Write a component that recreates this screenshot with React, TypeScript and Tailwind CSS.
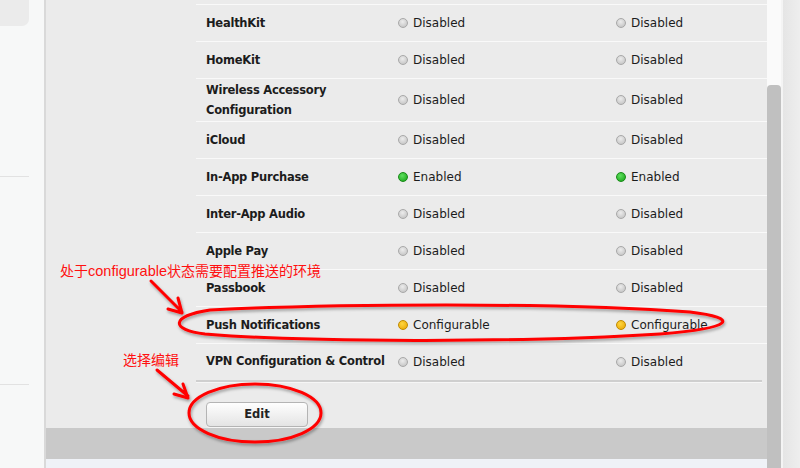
import React from "react";

type S = "d" | "e" | "c";
const rows: { name: string[]; a: S; b: S; h: string }[] = [
  { name: ["HealthKit"], a: "d", b: "d", h: "h-[37px]" },
  { name: ["HomeKit"], a: "d", b: "d", h: "h-[37px]" },
  { name: ["Wireless Accessory", "Configuration"], a: "d", b: "d", h: "h-[43px]" },
  { name: ["iCloud"], a: "d", b: "d", h: "h-[37px]" },
  { name: ["In-App Purchase"], a: "e", b: "e", h: "h-[37px]" },
  { name: ["Inter-App Audio"], a: "d", b: "d", h: "h-[37px]" },
  { name: ["Apple Pay"], a: "d", b: "d", h: "h-[37px]" },
  { name: ["Passbook"], a: "d", b: "d", h: "h-[37px]" },
  { name: ["Push Notifications"], a: "c", b: "c", h: "h-[37px]" },
];

function Dot({ s }: { s: S }) {
  if (s === "e")
    return <span className="inline-block w-[10px] h-[10px] rounded-full bg-[radial-gradient(circle_at_40%_35%,#5ee05e,#15a015)] border border-[#178a17]" />;
  if (s === "c")
    return <span className="inline-block w-[10px] h-[10px] rounded-full bg-[radial-gradient(circle_at_40%_35%,#ffd640,#e8a400)] border border-[#c08a00]" />;
  return <span className="inline-block w-[10px] h-[10px] rounded-full bg-[radial-gradient(circle_at_45%_35%,#ececec,#bdbdbd)] border border-[#a8a8a8]" />;
}

function Status({ s }: { s: S }) {
  const label = s === "e" ? "Enabled" : s === "c" ? "Configurable" : "Disabled";
  return (
    <div className="flex items-center gap-[5px]">
      <Dot s={s} />
      <span className="text-[12px] text-[#1c1c1c]">{label}</span>
    </div>
  );
}

export default function App() {
  return (
    <div
      className="relative w-[800px] h-[468px] flex overflow-hidden bg-[#ebebeb]"
      style={{ fontFamily: '"DejaVu Sans", "Noto Sans CJK SC", sans-serif' }}
    >
      {/* sidebar */}
      <div className="w-[46px] h-full bg-[#f7f8f8] border-r-2 border-[#d9d9d9] flex flex-col">
        <div className="w-[29px] h-[26px] bg-[#ebebeb] rounded-br-[7px]" />
        <div className="w-[29px] mt-[150px] border-t border-[#e2e2e2]" />
        <div className="w-[29px] mt-[207px] border-t border-[#e2e2e2]" />
      </div>

      {/* main */}
      <div className="w-[721px] h-full flex flex-col bg-[#ebebeb]">
        <div className="pl-[150px] flex flex-col">
          <div className="h-[5px] border-b border-[#f9f9f9]" />
          {rows.map((r, i) => (
            <div key={i} className={`${r.h} border-b border-[#f9f9f9] flex items-center`}>
              <div className="w-[202px] pl-[10px] text-[11.5px] tracking-[-0.25px] font-bold text-[#1c1c1c] leading-[20px]">
                {r.name.map((n, j) => (
                  <div key={j}>{n}</div>
                ))}
              </div>
              <div className="w-[218px]">
                <Status s={r.a} />
              </div>
              <Status s={r.b} />
            </div>
          ))}
          <div className="h-[36px] flex items-center">
            <div className="w-[202px] pl-[10px] text-[11.5px] tracking-[-0.25px] font-bold text-[#1c1c1c] whitespace-nowrap">
              VPN Configuration &amp; Control
            </div>
            <div className="w-[218px]">
              <Status s="d" />
            </div>
            <Status s="d" />
          </div>
          <div className="mr-[5px] border-t-2 border-[#cfcfcf] border-b border-b-[#f6f6f6]" />
          <div className="h-[45px] flex items-start pl-[10px] pt-[19px]">
            <button className="w-[102px] h-[25px] rounded-[4px] border border-[#b4b4b4] bg-[linear-gradient(#fefefe,#e4e4e4)] text-[11.5px] font-bold text-[#222] shadow-[0_1px_0_#f6f6f6]">
              Edit
            </button>
          </div>
        </div>
        <div className="h-[31px] bg-[#c9c9c9]" />
        <div className="flex-1 bg-[#eff2f7]" />
      </div>

      {/* scrollbar */}
      <div className="w-[14px] h-full bg-[#fafafa] flex justify-center pt-[85px]">
        <div className="w-[8px] flex-1 bg-[#c0c0c0] rounded-t-[4px]" />
      </div>
      <div className="flex-1 h-full border-l-2 border-[#f4f4f4] bg-[linear-gradient(90deg,#e5e5e5,#eeeeee)]" />

      {/* annotations */}
      <div className="absolute left-[60px] top-[261px] text-[14px] leading-[20px] text-[#ff1010] whitespace-nowrap" style={{ fontFamily: '"Liberation Sans", "Noto Sans CJK SC", sans-serif' }}>
        处于<span className="text-[14.5px]">configurable</span>状态需要配置推送的环境
      </div>
      <div className="absolute left-[123px] top-[350px] text-[14px] leading-[20px] text-[#ff1010] whitespace-nowrap" style={{ fontFamily: '"Liberation Sans", "Noto Sans CJK SC", sans-serif' }}>
        选择编辑
      </div>
      <svg className="absolute left-0 top-0 pointer-events-none" width="800" height="468" viewBox="0 0 800 468">
        <defs>
          <filter id="sh" x="-10%" y="-30%" width="120%" height="160%">
            <feDropShadow dx="1" dy="2" stdDeviation="1.5" floodColor="#000" floodOpacity="0.35" />
          </filter>
        </defs>
        <g fill="none" stroke="#ff0000" strokeWidth="3" strokeLinecap="round" strokeLinejoin="round" filter="url(#sh)">
          <path d="M151 281 L182 312 M168 309 L182 313 L178 298" />
          <path d="M157 370 L188 396 M174 394 L188 398 L183 384" />
          <path d="M210 310 C 330 304, 560 302, 690 312 C 740 318, 735 328, 660 334 C 520 343, 300 342, 205 334 C 170 330, 170 316, 210 310 Z" />
          <ellipse cx="255" cy="413" rx="66" ry="29" />
        </g>
      </svg>
    </div>
  );
}
